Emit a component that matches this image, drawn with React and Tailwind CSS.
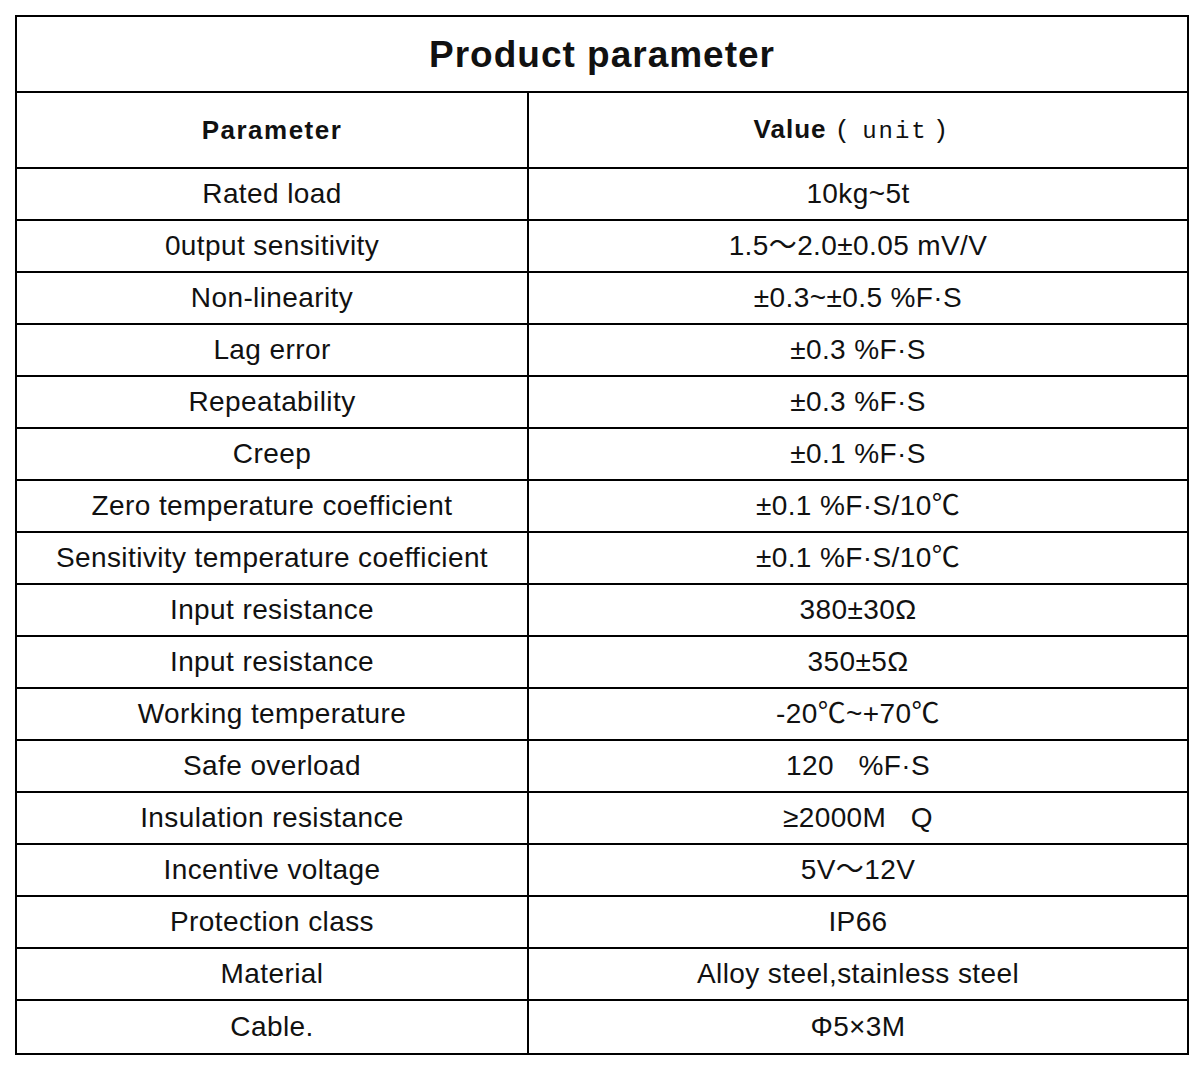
const rows = [
  ['Rated load', '10kg~5t'],
  ['0utput sensitivity', '1.5～2.0±0.05 mV/V'],
  ['Non-linearity', '±0.3~±0.5 %F·S'],
  ['Lag error', '±0.3 %F·S'],
  ['Repeatability', '±0.3 %F·S'],
  ['Creep', '±0.1 %F·S'],
  ['Zero temperature coefficient', '±0.1 %F·S/10℃'],
  ['Sensitivity temperature coefficient', '±0.1 %F·S/10℃'],
  ['Input resistance', '380±30Ω'],
  ['Input resistance', '350±5Ω'],
  ['Working temperature', '-20℃~+70℃'],
  ['Safe overload', '120\u00a0\u00a0\u00a0%F·S'],
  ['Insulation resistance', '≥2000M\u00a0\u00a0\u00a0Q'],
  ['Incentive voltage', '5V～12V'],
  ['Protection class', 'IP66'],
  ['Material', 'Alloy steel,stainless steel'],
  ['Cable.', 'Φ5×3M'],
];

const sans = { fontFamily: '"Liberation Sans", Arial, "Noto Sans CJK SC", sans-serif' };
const mono = { fontFamily: '"Liberation Mono", "Courier New", monospace' };

const App = () => {
  return (
    <div className="min-h-[1068px] w-[1204px] bg-white pl-[15px] pt-[15px] text-[#111]" style={sans}>
      <div className="w-[1174px] border-2 border-black">
        {/* Title */}
        <div className="flex h-[76px] items-center justify-center border-b-2 border-black">
          <h1 className="mt-[2px] text-[37px] font-bold tracking-[1px]">Product parameter</h1>
        </div>

        {/* Header */}
        <div className="flex h-[76px] border-b-2 border-black">
          <div className="flex w-[512px] items-center justify-center border-r-2 border-black text-[26px] font-bold tracking-[1.5px]">
            Parameter
          </div>
          <div className="flex flex-1 items-center justify-center text-[26px]">
            <p className="pr-[14px]">
              <span className="font-bold tracking-[1px]">Value</span>
              <span className="ml-[8px] mr-[12px] text-[26px] font-light" style={mono}>(</span>
              <span className="text-[24px] tracking-[2px]" style={mono}>unit</span>
              <span className="ml-[5px] text-[26px] font-light" style={mono}>)</span>
            </p>
          </div>
        </div>

        {/* Rows */}
        {rows.map(([name, value], i) => (
          <div
            key={i}
            className={`flex h-[52px] text-[28px] tracking-[0.4px] ${i < rows.length - 1 ? 'border-b-2 border-black' : ''}`}
          >
            <div className="flex w-[512px] items-center justify-center border-r-2 border-black">
              {name}
            </div>
            <div className="flex flex-1 items-center justify-center">{value}</div>
          </div>
        ))}
      </div>
    </div>
  );
};

export default App;
